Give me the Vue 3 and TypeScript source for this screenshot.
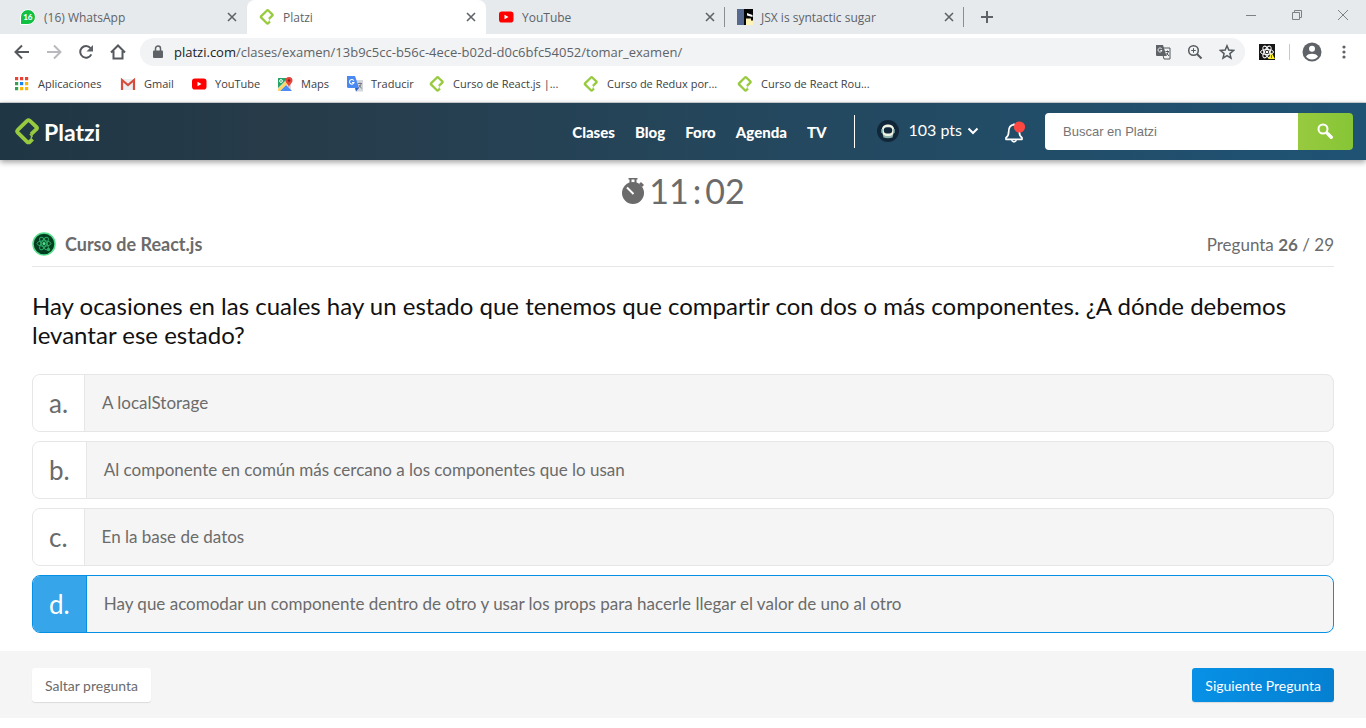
<script setup lang="ts">
import { ref } from 'vue'

interface Tab {
  title: string
  icon: string
  active?: boolean
  divider?: boolean
}

interface Bookmark {
  label: string
  icon: string
}

interface Option {
  key: string
  text: string
}

const tabs: Tab[] = [
  { title: '(16) WhatsApp', icon: 'whatsapp' },
  { title: 'Platzi', icon: 'platzi', active: true },
  { title: 'YouTube', icon: 'youtube', divider: true },
  { title: 'JSX is syntactic sugar', icon: 'jsx', divider: true },
]

const bookmarks: Bookmark[] = [
  { label: 'Aplicaciones', icon: 'apps' },
  { label: 'Gmail', icon: 'gmail' },
  { label: 'YouTube', icon: 'youtube' },
  { label: 'Maps', icon: 'maps' },
  { label: 'Traducir', icon: 'translate' },
  { label: 'Curso de React.js |...', icon: 'platzi' },
  { label: 'Curso de Redux por...', icon: 'platzi' },
  { label: 'Curso de React Rou...', icon: 'platzi' },
]

const links: string[] = ['Clases', 'Blog', 'Foro', 'Agenda', 'TV']

const options: Option[] = [
  { key: 'a', text: 'A localStorage' },
  { key: 'b', text: 'Al componente en común más cercano a los componentes que lo usan' },
  { key: 'c', text: 'En la base de datos' },
  { key: 'd', text: 'Hay que acomodar un componente dentro de otro y usar los props para hacerle llegar el valor de uno al otro' },
]

const selected = ref<string>('d')
const search = ref<string>('')
const address = ref<string>('/clases/examen/13b9c5cc-b56c-4ece-b02d-d0c6bfc54052/tomar_examen/')
</script>

<template>
  <svg class="sprite" aria-hidden="true">
    <symbol id="i-platzi" viewBox="0 0 26 28">
      <path d="M16.8 16.8 L22.3 11.600 Q23.6 10.500 22.3 9.300 L15.6 3 Q14 1.6 12.5 3 L2.9 12.4 Q1.6 13.8 2.9 15.2 L12.4 24.6 Q14 26 15.6 24.6 L18.3 21.9" fill="none" stroke="#98ca3f" stroke-width="4" stroke-linejoin="round" />
      <path d="M15.500 16.500 L17.800 18.800 L16.500 20.500" fill="none" stroke="#98ca3f" stroke-width="1.600" />
    </symbol>
    <symbol id="i-whatsapp" viewBox="0 0 16 16">
      <path d="M.5 15.500V8A7.500 7.500 0 1 1 8 15.500z" fill="#12c143" stroke="#fff" stroke-width="1" />
      <text x="7.800" y="11" font-size="8" font-weight="900" fill="#fff" text-anchor="middle" font-family="Lato, sans-serif">16</text>
    </symbol>
    <symbol id="i-youtube" viewBox="0 0 16 16">
      <rect x="1" y="2.500" width="14.500" height="11" rx="2.800" fill="#f00" />
      <path d="M6.500 5.700v4.600l4-2.300z" fill="#fff" />
    </symbol>
    <symbol id="i-jsx" viewBox="0 0 16 16">
      <path d="M0 0h7v16H0z" fill="#57698f" />
      <path d="M7 0h9v16H7z" fill="#050505" />
      <path d="M10 4l5.500 2v2L10 6.500z" fill="#fff" />
      <path d="M9 9.500h5v2h2V16H9z" fill="#fff3b5" />
    </symbol>
    <symbol id="i-apps" viewBox="0 0 16 16">
      <path d="M1 1h3.200v3.200H1zM6 1h3.200v3.200H6zM11 1h3.200v3.200H11z" fill="#ea4335" />
      <path d="M1 6h3.200v3.200H1zM1 11h3.200v3.200H1z" fill="#34a053" />
      <path d="M6 6h3.200v3.200H6z" fill="#1a83f0" />
      <path d="M11 6h3.200v3.200H11zM6 11h3.200v3.200H6zM11 11h3.200v3.200H11z" fill="#fbb505" />
    </symbol>
    <symbol id="i-gmail" viewBox="0 0 16 16">
      <path d="M1 3h14v11H1z" fill="#eceff1" />
      <path d="M2 14V4l6 5 6-5v10" fill="none" stroke="#d54b3d" stroke-width="2.200" />
    </symbol>
    <symbol id="i-maps" viewBox="0 0 16 16">
      <path d="M1 2h13v13H1z" fill="#dadce0" />
      <path d="M1 2h10L1 12z" fill="#24a566" />
      <path d="M3 15l6-6 6 6z" fill="#4b8bf5" />
      <path d="M1 13l8-8 2 2-8 8H1z" fill="#fdd663" />
      <path d="M12 1a3.500 3.500 0 0 1 3.500 3.500C15.500 7 12.500 8 12 11.500 11.500 8 8.500 7 8.500 4.500A3.500 3.500 0 0 1 12 1z" fill="#e5453a" />
      <circle cx="12" cy="4.500" r="1.200" fill="#8c1f1a" />
      <circle cx="4" cy="5" r="1.400" fill="none" stroke="#fff" />
    </symbol>
    <symbol id="i-translate" viewBox="0 0 16 16">
      <path d="M6 4h10v11.500H9z" fill="#d3d6da" />
      <path d="M0 0h8l4 12H1.500A1.500 1.500 0 0 1 0 10.500z" fill="#4a88f2" />
      <path d="M8 12h4l-3 3.500z" fill="#2c5fc4" />
      <path d="M6.800 4.600A2.300 2.300 0 1 0 7 6.500H5" fill="none" stroke="#fff" stroke-width="1.100" />
      <path d="M10.800 7.500H15M13 6.500v1M14.300 7.500q-.5 2.500-3 4.500M12 9l2.700 3.500" fill="none" stroke="#777d85" />
    </symbol>
  </svg>

  <div class="browser">
    <div class="tabstrip">
      <div v-for="tab in tabs" :key="tab.title" class="tab" :class="{ active: tab.active, divided: tab.divider }">
        <svg class="favicon"><use :href="'#i-' + tab.icon" /></svg>
        <span class="tab-title">{{ tab.title }}</span>
        <button class="tab-close" type="button" aria-label="Cerrar pestaña">
          <svg viewBox="0 0 16 16"><path d="M4 4l8 8M12 4l-8 8" /></svg>
        </button>
      </div>
      <button class="new-tab" type="button" aria-label="Nueva pestaña">
        <svg viewBox="0 0 16 16"><path d="M8 2v12M2 8h12" /></svg>
      </button>
      <div class="window-controls">
        <button type="button" aria-label="Minimizar"><svg viewBox="0 0 12 12"><path d="M1 6.500h10" /></svg></button>
        <button type="button" aria-label="Restaurar"><svg viewBox="0 0 12 12"><path d="M1.500 3.500h7v7h-7zM3.500 3.500v-2h7v7h-2" /></svg></button>
        <button type="button" aria-label="Cerrar"><svg viewBox="0 0 12 12"><path d="M1 1l10 10M11 1L1 11" /></svg></button>
      </div>
    </div>

    <div class="toolbar">
      <button class="tool" type="button" aria-label="Atrás">
        <svg viewBox="0 0 16 16"><path d="M15 8H2M8 1.500L1.500 8 8 14.500" /></svg>
      </button>
      <button class="tool faded" type="button" aria-label="Adelante">
        <svg viewBox="0 0 16 16"><path d="M1 8h13M8 1.500L14.500 8 8 14.500" /></svg>
      </button>
      <button class="tool" type="button" aria-label="Recargar">
        <svg viewBox="0 0 16 16"><path d="M13.300 10.300A5.800 5.800 0 1 1 12.500 4.200" /><path d="M15 1v6.500H8.500z" class="solid" /></svg>
      </button>
      <button class="tool" type="button" aria-label="Inicio">
        <svg viewBox="0 0 16 16"><path d="M1 8.500L8 1.500l7 7M3.500 7v7.500h9V7" /></svg>
      </button>
      <div class="omnibox">
        <svg class="lock" viewBox="0 0 10 14"><path d="M1 5.500h8a1 1 0 0 1 1 1V12a1 1 0 0 1-1 1H1a1 1 0 0 1-1-1V6.500a1 1 0 0 1 1-1z" /><path d="M2.500 6V3.500a2.500 2.500 0 0 1 5 0V6" class="shackle" /></svg>
        <span class="url"><b>platzi.com</b>{{ address }}</span>
        <button class="tool" type="button" aria-label="Traducir esta página">
          <svg viewBox="0 0 16 16"><path d="M6 4h9v11H9z" class="thin" /><path d="M1 1h7l3.500 11H2a1 1 0 0 1-1-1z" class="solid" /><path d="M6.800 5A2 2 0 1 0 7 6.500H5.300" class="light" /><path d="M10.500 7.500h3.500M12.500 6.500v1M13.500 7.500l-2 4M11.500 9l2.500 3" class="thin" /></svg>
        </button>
        <button class="tool" type="button" aria-label="Zoom">
          <svg viewBox="0 0 16 16"><circle cx="6.500" cy="6.500" r="4.800" class="medium" /><path d="M10 10l4.500 4.500" /><path d="M6.500 4.200v4.600M4.200 6.500h4.600" class="thin" /></svg>
        </button>
        <button class="tool" type="button" aria-label="Marcador">
          <svg viewBox="0 0 16 16"><path d="M8 1.800l1.800 4.300 4.700.4-3.600 3.100 1.100 4.600L8 11.700l-4 2.500 1.100-4.600L1.500 6.500l4.700-.4z" class="medium" /></svg>
        </button>
      </div>
      <button class="tool ext" type="button" aria-label="React Developer Tools">
        <svg viewBox="0 0 16 16"><path d="M0 0h16v16H0z" fill="#171717" stroke="none" /><g fill="none" stroke="#fff" stroke-width="1"><ellipse cx="8" cy="8" rx="6.500" ry="2.600" /><ellipse cx="8" cy="8" rx="6.500" ry="2.600" transform="rotate(60 8 8)" /><ellipse cx="8" cy="8" rx="6.500" ry="2.600" transform="rotate(120 8 8)" /></g><circle cx="8" cy="8" r="1.300" fill="#fff" stroke="none" /><path d="M12.500 8.500L16 15H9z" fill="#fff01f" stroke="none" /><path d="M12.500 11v3" stroke="#776f00" stroke-width="1" /></svg>
      </button>
      <span class="tool-divider"></span>
      <button class="tool profile" type="button" aria-label="Perfil">
        <svg viewBox="0 0 20 20"><circle cx="10" cy="10" r="9.500" fill="#5f6368" stroke="none" /><circle cx="10" cy="6.800" r="3" fill="#fff" stroke="none" /><path d="M4 14.500c1-2 4-2.700 6-2.700s5 .7 6 2.700a7.500 7.500 0 0 1-12 0z" fill="#fff" stroke="none" /></svg>
      </button>
      <button class="tool" type="button" aria-label="Menú">
        <svg viewBox="0 0 16 16"><g class="solid"><circle cx="8" cy="3" r="1.600" /><circle cx="8" cy="8" r="1.600" /><circle cx="8" cy="13" r="1.600" /></g></svg>
      </button>
    </div>

    <nav class="bookmarks" aria-label="Marcadores">
      <a v-for="mark in bookmarks" :key="mark.label" href="#">
        <svg class="favicon"><use :href="'#i-' + mark.icon" /></svg>
        <span>{{ mark.label }}</span>
      </a>
    </nav>
  </div>

  <header class="site-header">
    <a class="brand" href="#">
      <svg class="brand-mark"><use href="#i-platzi" /></svg>
      <span>Platzi</span>
    </a>
    <nav class="main-nav" aria-label="Principal">
      <a v-for="link in links" :key="link" href="#">{{ link }}</a>
    </nav>
    <button class="points" type="button">
      <svg class="avatar" viewBox="0 0 22 22"><circle cx="11" cy="11" r="11" fill="#12263a" /><path d="M5.500 13.500l1 4q4.500 1.500 9 0l1-4z" fill="#8fb3ad" /><rect x="4.800" y="4.500" width="12.400" height="11.500" rx="5.200" fill="#eef2e4" /><rect x="6.800" y="7.200" width="8.400" height="6.400" rx="3" fill="#12263a" /><path d="M5 9v4M17 9v4" stroke="#79aca4" stroke-width="1.500" /></svg>
      <span>103 pts</span>
      <svg class="chevron" viewBox="0 0 12 8"><path d="M1.500 1.500L6 6l4.500-4.500" /></svg>
    </button>
    <button class="bell" type="button" aria-label="Notificaciones">
      <svg viewBox="0 0 22 22"><path d="M10 2.500v1.200C6 4.200 4.700 7 4.700 10.500c0 3.500-.7 5-2.700 6.300v1.500h16v-1.500c-2-1.300-2.700-2.800-2.700-6.300C15.300 7 14 4.200 10 3.700" fill="none" stroke="#fff" stroke-width="1.700" stroke-linejoin="round" /><path d="M7.500 19.300q2.500 3 5 0" fill="none" stroke="#fff" stroke-width="1.700" /><circle cx="15.500" cy="6" r="5.600" fill="#ff4742" /></svg>
    </button>
    <form class="search" role="search" @submit.prevent>
      <input v-model="search" type="text" placeholder="Buscar en Platzi" aria-label="Buscar en Platzi" />
      <button type="submit" aria-label="Buscar">
        <svg viewBox="0 0 16 16"><circle cx="6" cy="6" r="4.500" fill="none" stroke="#fff" stroke-width="2" /><path d="M9.300 9.300l1.300 1.300" stroke="#fff" stroke-width="2" /><path d="M10.800 10.800l3.400 3.400" stroke="#fff" stroke-width="3.400" stroke-linecap="round" /></svg>
      </button>
    </form>
  </header>

  <main class="exam">
    <div class="timer">
      <svg viewBox="0 0 24 28"><circle cx="12" cy="16" r="11" fill="#6b6b6b" /><path d="M7.500 1h9v1.500h-9zM8.500 2.500h2V6h-2zM13.500 2.500h2V6h-2z" fill="#6b6b6b" /><path d="M20 5l3 3-2 2-3-3z" fill="#6b6b6b" /><path d="M12.500 17L6 10.500" stroke="#fff" stroke-width="2" /></svg>
      <span>11</span><span>:</span><span>02</span>
    </div>

    <div class="course">
      <svg class="course-badge" viewBox="0 0 24 24"><circle cx="12" cy="12" r="11" fill="#033d20" stroke="#54e08d" stroke-width="1.500" /><g fill="none" stroke="#2fae68" stroke-width="1"><ellipse cx="12" cy="11.500" rx="7" ry="2.700" /><ellipse cx="12" cy="11.500" rx="7" ry="2.700" transform="rotate(60 12 11.500)" /><ellipse cx="12" cy="11.500" rx="7" ry="2.700" transform="rotate(120 12 11.500)" /></g><circle cx="12" cy="11.500" r="1.500" fill="#54e08d" /><circle cx="16.500" cy="17.500" r="1.700" fill="#2fae68" /></svg>
      <strong>Curso de React.js</strong>
      <span class="progress">Pregunta <b>26</b> / 29</span>
    </div>

    <fieldset class="question">
      <legend>Hay ocasiones en las cuales hay un estado que tenemos que compartir con dos o más componentes. ¿A dónde debemos levantar ese estado?</legend>
      <label v-for="option in options" :key="option.key" class="option" :class="{ chosen: selected === option.key }">
        <input v-model="selected" type="radio" name="respuesta" :value="option.key" />
        <span class="letter">{{ option.key }}.</span>
        <span class="answer">{{ option.text }}</span>
      </label>
    </fieldset>
  </main>

  <footer class="actions">
    <button class="skip" type="button">Saltar pregunta</button>
    <button class="next" type="button">Siguiente Pregunta</button>
  </footer>
</template>

<style>
body {
  margin: 0;
  background: #fff;
  font-family: Lato, "Liberation Sans", sans-serif;
  font-variant-ligatures: none;
}
</style>

<style scoped>
button,
input {
  font-family: inherit;
}

button {
  padding: 0;
  border: 0;
  background: none;
  cursor: pointer;
}

a {
  text-decoration: none;
}

svg {
  display: block;
  flex: none;
}

.sprite {
  display: none;
}

.favicon {
  width: 16px;
  height: 16px;
}

.browser {
  font-family: "Open Sans", "Noto Sans", sans-serif;
  font-size: 12px;
  color: #3c4043;
  border-bottom: 1px solid #d5d8dc;
}

.tabstrip {
  display: flex;
  height: 34px;
  padding-left: 8px;
  background: #e6eaed;
}

.tab {
  display: flex;
  flex: 0 1 239px;
  box-sizing: border-box;
  align-items: center;
  gap: 8px;
  padding: 0 7px 0 12px;
  color: #5f6368;
}

.tab.active {
  background: #fff;
  border-radius: 8px 8px 0 0;
}

.tab-title {
  flex: 1;
  white-space: nowrap;
}

.tab.divided {
  background: linear-gradient(#8b8f94, #8b8f94) right center / 1px 20px no-repeat;
}

.tab-close svg,
.new-tab svg {
  width: 16px;
  height: 16px;
  fill: none;
  stroke: #5f6368;
  stroke-width: 1.6;
}

.new-tab {
  width: 46px;
  display: flex;
  align-items: center;
  justify-content: center;
}

.new-tab svg {
  stroke-width: 2;
}

.window-controls {
  display: flex;
  height: 30px;
  margin-left: auto;
}

.window-controls button {
  display: flex;
  width: 46px;
  align-items: center;
  justify-content: center;
}

.window-controls svg {
  width: 12px;
  height: 12px;
  fill: none;
  stroke: #7d8185;
}

.toolbar {
  display: flex;
  align-items: center;
  padding: 4px 6px 3px;
}

.tool {
  display: flex;
  width: 32px;
  height: 28px;
  align-items: center;
  justify-content: center;
}

.tool svg {
  width: 16px;
  height: 16px;
  fill: none;
  stroke: #55595e;
  stroke-width: 2;
}

.tool.faded svg {
  stroke: #b8babd;
}

.tool svg .solid {
  fill: #5f6368;
  stroke: none;
}

.tool svg .thin {
  stroke-width: 1;
}

.tool svg .medium {
  stroke-width: 1.5;
}

.tool svg .light {
  stroke: #f1f3f4;
  stroke-width: 1;
}

.tool.profile svg {
  width: 20px;
  height: 20px;
}

.tool-divider {
  width: 1px;
  height: 16px;
  margin: 0 6px;
  background: #c6c9cc;
}

.omnibox {
  display: flex;
  flex: 1;
  align-items: center;
  height: 28px;
  margin: 0 6px;
  padding: 0 2px 0 13px;
  border-radius: 14px;
  background: #f1f3f4;
}

.lock {
  width: 10px;
  height: 14px;
  fill: #5f6368;
}

.lock .shackle {
  fill: none;
  stroke: #5f6368;
  stroke-width: 1.5;
}

.url {
  flex: 1;
  margin-left: 11px;
  font-size: 13px;
  color: #5f6368;
  white-space: nowrap;
}

.url b {
  font-weight: 400;
  color: #202124;
}

.bookmarks {
  display: grid;
  grid-template-columns: 106px 71px 86px 70px 82px 154px 154px 154px;
  height: 33px;
  align-items: center;
  padding-left: 14px;
  padding-bottom: 4px;
  box-sizing: border-box;
  font-size: 11px;
}

.bookmarks a {
  display: flex;
  align-items: center;
  gap: 8px;
  color: #3c4043;
  white-space: nowrap;
}

.site-header {
  display: flex;
  align-items: center;
  height: 57px;
  padding: 0 13px 0 15px;
  color: #fff;
  background: linear-gradient(90deg, #1f3644, #273b49 20%, #24475d 55%, #1f5374);
  box-shadow: 0 2px 6px rgba(0, 0, 0, 0.4);
}

.brand {
  display: flex;
  align-items: center;
  gap: 4px;
  margin-right: auto;
  font-size: 23px;
  line-height: 26px;
  font-weight: 700;
  color: #fff;
}

.brand-mark {
  width: 25px;
  height: 27px;
}

.main-nav {
  display: flex;
  align-items: center;
  gap: 20px;
  height: 33px;
  padding-right: 27px;
  border-right: 1px solid #fff;
}

.main-nav a {
  font-size: 15px;
  font-weight: 900;
  color: #fff;
}

.points {
  display: flex;
  align-items: center;
  margin-left: 22px;
  padding-bottom: 2px;
  font-size: 16px;
  line-height: 20px;
  color: #fff;
}

.points span {
  padding-bottom: 2px;
}

.avatar {
  width: 22px;
  height: 22px;
  margin-right: 10px;
}

.chevron {
  width: 12px;
  height: 8px;
  margin-left: 5px;
  fill: none;
  stroke: #fff;
  stroke-width: 2;
}

.bell {
  margin: 0 19px 0 25px;
}

.bell svg {
  width: 22px;
  height: 22px;
}

.search {
  display: flex;
  flex: 0 1 308px;
  height: 37px;
  overflow: hidden;
  border-radius: 4px;
}

.search input {
  flex: 1;
  min-width: 0;
  padding: 0 18px;
  border: 0;
  outline: 0;
  background: #fff;
  font-family: "Liberation Sans", sans-serif;
  font-size: 13px;
  color: #555;
}

.search input::placeholder {
  color: #757575;
}

.search button {
  display: flex;
  box-sizing: border-box;
  width: 55px;
  padding: 0 2px 2px 0;
  align-items: center;
  justify-content: center;
  background: linear-gradient(90deg, #98ca3f, #86c536);
}

.search svg {
  width: 16px;
  height: 16px;
}

.exam {
  padding: 0 32px 18px;
  color: #6b6b6b;
}

.timer {
  display: flex;
  align-items: center;
  justify-content: center;
  gap: 4px;
  height: 62px;
  font-size: 34px;
  line-height: 44px;
}

.timer svg {
  width: 24px;
  height: 28px;
}

.course {
  display: flex;
  align-items: center;
  height: 44px;
  border-bottom: 1px solid #e6e6e6;
  font-size: 18px;
}

.course-badge {
  width: 24px;
  height: 24px;
  margin-right: 9px;
}

.progress {
  margin-left: auto;
  font-size: 17px;
}

.question {
  display: flex;
  flex-direction: column;
  gap: 9px;
  min-width: 0;
  margin: 24px 0 0;
  padding: 0;
  border: 0;
}

.question legend {
  margin-bottom: 25px;
  padding: 0;
  font-size: 24px;
  line-height: 29px;
  color: #111;
}

.option {
  display: flex;
  position: relative;
  box-sizing: border-box;
  height: 58px;
  overflow: hidden;
  border: 1px solid #e6e6e6;
  border-radius: 8px;
  background: #f5f5f5;
  cursor: pointer;
}

.option input {
  position: absolute;
  margin: 0;
  opacity: 0;
}

.letter {
  display: flex;
  align-items: center;
  padding: 0 16px;
  border-right: 1px solid #e6e6e6;
  background: #fff;
  font-size: 26px;
}

.answer {
  display: flex;
  align-items: center;
  padding: 0 17px 2px;
  font-size: 17px;
}

.option.chosen {
  border-color: #0791e6;
}

.chosen .letter {
  border-color: #0791e6;
  background: #37a5ea;
  color: #fff;
}

.actions {
  display: flex;
  align-items: center;
  justify-content: space-between;
  height: 67px;
  padding: 0 32px;
  background: #f5f5f5;
}

.actions button {
  height: 34px;
  padding: 2px 13px 0;
  border-radius: 3px;
  font-size: 14px;
  box-shadow: 0 1px 1px rgba(0, 0, 0, 0.1);
}

.actions .skip {
  background: #fff;
  color: #6b6b6b;
}

.actions .next {
  background: linear-gradient(90deg, #0791e6, #0580d1);
  color: #fff;
}
</style>
